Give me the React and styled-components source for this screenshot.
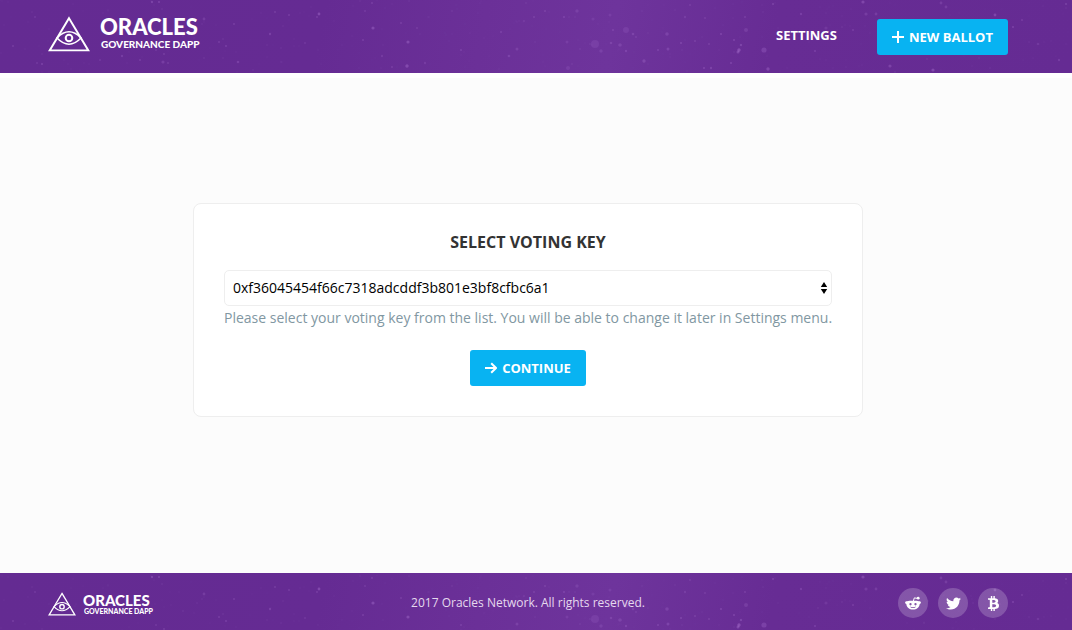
import React from "react";
import styled, { createGlobalStyle } from "styled-components";
import { FaTwitter, FaBtc } from "react-icons/fa";

const GlobalStyle = createGlobalStyle`
  * { box-sizing: border-box; }
  body {
    margin: 0;
    background: #fcfcfc;
    font-family: "Open Sans", sans-serif;
    font-size: 14px;
  }
`;

const Page = styled.div`
  display: flex;
  flex-direction: column;
  min-height: 100vh;
`;

const Band = styled.div`
  position: relative;
  overflow: hidden;
  background: linear-gradient(100deg, #642b92 0%, #652b93 30%, #6b3098 45%, #6e349c 57%, #672c94 72%, #652b93 100%);
`;

const Sky = styled.svg`
  position: absolute;
  top: ${(p) => p.$top}px;
  left: 0;
  pointer-events: none;
`;

const BandInner = styled.div`
  position: relative;
  display: grid;
  grid-template-columns: 1fr auto 1fr;
  align-items: ${(p) => p.$align || "center"};
  padding: ${(p) => p.$pad};
`;

const Logo = styled.a`
  display: flex;
  align-items: center;
  justify-self: start;
  gap: ${(p) => (p.$small ? 7 : 10)}px;
  padding-top: ${(p) => (p.$small ? 2 : 0)}px;
  color: #fff;
  text-decoration: none;
`;

const LogoText = styled.span`
  display: flex;
  flex-direction: column;
  font-family: Lato, sans-serif;
`;

const LogoName = styled.span`
  font-size: ${(p) => (p.$small ? 15 : 22)}px;
  line-height: ${(p) => (p.$small ? 14 : 20)}px;
  font-weight: 900;
`;

const LogoSub = styled.span`
  padding-left: 1px;
  font-size: ${(p) => (p.$small ? 7 : 10)}px;
  line-height: ${(p) => (p.$small ? 8 : 14)}px;
  font-weight: 900;
`;

const Nav = styled.nav`
  grid-column: 3;
  justify-self: end;
  display: flex;
  align-items: center;
  gap: 40px;
  padding-top: 3px;
`;

const NavLink = styled.a`
  color: #fff;
  font-size: 13px;
  line-height: 18px;
  font-weight: 700;
  text-decoration: none;
  padding-bottom: 4px;
`;

const Button = styled.button`
  display: inline-flex;
  align-items: center;
  gap: 5px;
  height: 36px;
  padding: 0 15px;
  border: 0;
  border-radius: 3px;
  background: #08b3f2;
  color: #fff;
  font: 700 13px/18px "Open Sans", sans-serif;
  cursor: pointer;
`;

const Main = styled.main`
  flex: 1;
  display: flex;
  align-items: center;
  justify-content: center;
  border-top: 5px solid #fff;
  padding: 0 64px 31px 48px;
`;

const Card = styled.form`
  display: flex;
  flex-direction: column;
  align-items: center;
  width: 100%;
  max-width: 670px;
  padding: 30px;
  background: #fff;
  border: 1px solid #eee;
  border-radius: 8px;
`;

const Title = styled.label`
  margin-bottom: 20px;
  color: #333;
  font-size: 16px;
  line-height: 16px;
  font-weight: 700;
`;

const SelectBox = styled.div`
  display: grid;
  width: 100%;
  align-items: center;
  > * { grid-area: 1 / 1; }
  > svg {
    justify-self: end;
    margin-right: 4px;
    pointer-events: none;
  }
`;

const Select = styled.select`
  appearance: none;
  width: 100%;
  height: 36px;
  padding: 0 24px 0 8px;
  border: 1px solid #eee;
  border-radius: 5px;
  background: #fff;
  color: #000;
  font: 14px/20px "Open Sans", sans-serif;
`;

const Help = styled.p`
  align-self: flex-start;
  margin: 0 0 20px;
  color: #8197a2;
  line-height: 24px;
  @media (min-width: 800px) {
    white-space: nowrap;
  }
`;

const Copyright = styled.p`
  margin: 0;
  color: #e5d9ee;
  font-size: 12px;
  line-height: 18px;
`;

const Socials = styled.div`
  justify-self: end;
  display: flex;
  gap: 10px;
`;

const Social = styled.a`
  display: flex;
  align-items: center;
  justify-content: center;
  width: 30px;
  height: 30px;
  border-radius: 50%;
  background: rgba(255, 255, 255, 0.2);
  color: #fff;
`;

// x, y, radius, opacity
const bright = [
  [13, 46, 1, 0.2], [35, 17, 1, 0.15], [42, 64, 1, 0.25], [37, 63, 1, 0.15],
  [152, 2, 1.2, 0.25], [159, 2, 1, 0.25], [100, 60, 1, 0.15], [122, 56, 1.2, 0.2],
  [140, 60, 1, 0.2], [163, 62, 1.6, 0.2], [168, 63, 1, 0.18], [164, 54, 1, 0.18],
  [156, 50, 1, 0.15], [204, 19, 1.4, 0.18], [219, 42, 1, 0.2],
  [226, 46, 1, 0.22], [234, 24, 1, 0.2], [238, 62, 1.3, 0.22], [270, 34, 1.2, 0.22],
  [275, 12, 1, 0.18], [289, 15, 1, 0.2], [305, 43, 1, 0.14], [319, 14, 1.4, 0.32],
  [317, 17, 1, 0.2], [372, 3, 1, 0.18], [365, 11, 1, 0.15], [373, 28, 1.6, 0.3],
  [363, 40, 1, 0.2], [401, 23, 1, 0.18], [417, 28, 1, 0.15], [408, 42, 1.6, 0.3],
  [382, 56, 1.2, 0.15], [407, 66, 1.7, 0.3], [425, 63, 1.2, 0.16], [392, 67, 1, 0.18],
  [461, 50, 1, 0.2], [501, 32, 1, 0.2], [517, 49, 1.5, 0.18], [509, 56, 1.3, 0.2],
  [524, 21, 1, 0.14], [534, 17, 1, 0.18], [545, 11, 1, 0.18], [577, 11, 1.7, 0.16],
  [564, 17, 1, 0.22], [593, 19, 1.6, 0.12], [610, 15, 1.5, 0.13],
  [626, 30, 3, 0.13], [595, 44, 4, 0.13], [601, 51, 1.7, 0.16], [620, 45, 1.8, 0.18],
  [611, 43, 1.3, 0.18], [633, 34, 1.3, 0.2], [636, 37, 1, 0.16], [613, 30, 1, 0.2],
  [567, 42, 1.5, 0.13], [568, 68, 2, 0.13], [626, 51, 1.2, 0.2], [644, 61, 1.7, 0.23],
  [667, 34, 1.8, 0.2], [658, 50, 1, 0.22], [668, 49, 1.5, 0.22], [681, 43, 1, 0.2],
  [695, 41, 1, 0.18], [709, 44, 1, 0.18], [721, 34, 1, 0.25], [746, 30, 2, 0.17],
  [734, 40, 1, 0.25], [741, 45, 1.2, 0.25], [739, 50, 1.7, 0.35], [738, 52, 1.5, 0.3],
  [731, 63, 1, 0.25], [711, 68, 1.2, 0.22], [704, 68, 1, 0.25], [685, 17, 1.2, 0.16],
  [705, 18, 1, 0.16], [690, 5, 1, 0.16], [745, 17, 1, 0.18], [764, 50, 2.6, 0.22],
  [768, 69, 1.7, 0.28], [773, 4, 1, 0.24], [801, 14, 1.2, 0.2], [863, 2, 1.6, 0.28],
  [866, 14, 1.6, 0.18], [876, 14, 1.4, 0.18], [853, 30, 1, 0.2], [826, 28, 1.6, 0.14],
  [890, 66, 1.6, 0.25], [933, 70, 1.6, 0.3], [815, 51, 1, 0.22], [941, 3, 1.4, 0.18],
  [946, 7, 1.4, 0.18], [995, 15, 1.4, 0.28], [1013, 27, 1, 0.25], [1022, 20, 1, 0.2],
  [1038, 44, 1.3, 0.15], [1066, 4, 1, 0.24], [1059, 60, 1.2, 0.18],
];

// Faint dust between the brighter stars.
const dust = Array.from({ length: 300 }, (_, i) => [
  (i * 197 + ((i * i * 13) % 89)) % 1072,
  (i * 41 + ((i * i * 7) % 31)) % 75,
  i % 4 === 0 ? 1 : 0.7,
  0.04 + (i % 5) * 0.012,
]);

const Stars = ({ top }) => (
  <Sky $top={top} width="1072" height="75" aria-hidden="true">
    {[...dust, ...bright].map(([x, y, r, o], i) => (
      <circle key={i} cx={x} cy={y} r={r} fill="#cf9cf2" opacity={o * 0.85} />
    ))}
  </Sky>
);

const Eye = ({ width, height, stroke }) => (
  <svg width={width} height={height} viewBox="0 0 42 36" fill="none" stroke="#fff" strokeWidth={stroke} aria-hidden="true">
    <path d="M21 2.2 40.3 34.4H1.7Z" />
    <path d="M9 22Q21 9.6 33 22Q21 34.4 9 22Z" strokeWidth={stroke - 0.3} />
    <circle cx="21" cy="22" r="3.3" strokeWidth={stroke + 0.1} />
  </svg>
);

const Reddit = () => (
  <svg width="16" height="14" viewBox="0 0 16 14" aria-hidden="true">
    <path
      fill="currentColor"
      fillRule="evenodd"
      d="M2 5.2C3.4 4.9 5.4 4.8 8 4.8s4.600.1 6 .4c1.100-.2 1.900.4 1.900 1.300 0 .8-.5 1.300-1.200 1.500C14.400 11.400 11.700 13.600 8 13.600S1.600 11.400 1.300 8C.6 7.800.1 7.300.1 6.500.1 5.600.9 5 2 5.200ZM5.500 7.100a1.150 1.150 0 1 0 0 2.300 1.150 1.150 0 0 0 0-2.300ZM10.500 7.100a1.150 1.150 0 1 0 0 2.300 1.150 1.150 0 0 0 0-2.300ZM4.900 10.500C5.700 11.700 6.700 12.100 8 12.100s2.300-.4 3.100-1.600C10.200 11.100 9.200 11.300 8 11.300s-2.200-.2-3.100-.8Z"
    />
    <path d="M8.400 5 9.300 1.900 12.200 2.300" fill="none" stroke="currentColor" strokeWidth="1" />
    <circle cx="13.200" cy="2.200" r="1.400" fill="currentColor" />
  </svg>
);

const Brand = ({ small }) => (
  <Logo href="#" $small={small}>
    <Eye width={small ? 28 : 42} height={small ? 24 : 36} stroke={small ? 2 : 1.9} />
    <LogoText>
      <LogoName $small={small}>ORACLES</LogoName>
      <LogoSub $small={small}>GOVERNANCE DAPP</LogoSub>
    </LogoText>
  </Logo>
);

const key = "0xf36045454f66c7318adcddf3b801e3bf8cfbc6a1";

export default function App() {
  return (
    <Page>
      <GlobalStyle />
      <Band as="header">
        <Stars top={0} />
        <BandInner $pad="16px 64px 18px 48px" $align="start">
          <Brand />
          <Nav>
            <NavLink href="#settings">SETTINGS</NavLink>
            <Button type="button">
              <svg width="12" height="12" viewBox="0 0 12 12" stroke="#fff" strokeWidth="2" aria-hidden="true">
                <path d="M6 0v12M0 6h12" />
              </svg>
              NEW BALLOT
            </Button>
          </Nav>
        </BandInner>
      </Band>
      <Main>
        <Card onSubmit={(e) => e.preventDefault()}>
          <Title htmlFor="voting-key">SELECT VOTING KEY</Title>
          <SelectBox>
            <Select id="voting-key" defaultValue={key}>
              <option value={key}>{key}</option>
            </Select>
            <svg width="8" height="12" viewBox="0 0 8 12" aria-hidden="true">
              <path d="M4 0 7.2 5H.8ZM4 12 .8 7h6.4Z" />
            </svg>
          </SelectBox>
          <Help>Please select your voting key from the list. You will be able to change it later in Settings menu.</Help>
          <Button type="submit">
            <svg width="12" height="12" viewBox="0 0 12 12" fill="none" stroke="#fff" strokeWidth="2" aria-hidden="true">
              <path d="M0 6h11M6.2 1.2 11 6 6.2 10.8" />
            </svg>
            CONTINUE
          </Button>
        </Card>
      </Main>
      <Band as="footer">
        <Stars top={2} />
        <BandInner $pad="15px 64px 12px 48px">
          <Brand small />
          <Copyright>2017 Oracles Network. All rights reserved.</Copyright>
          <Socials>
            <Social href="#reddit" aria-label="Reddit"><Reddit /></Social>
            <Social href="#twitter" aria-label="Twitter"><FaTwitter size={15} /></Social>
            <Social href="#bitcoin" aria-label="Bitcoin"><FaBtc size={15} /></Social>
          </Socials>
        </BandInner>
      </Band>
    </Page>
  );
}
